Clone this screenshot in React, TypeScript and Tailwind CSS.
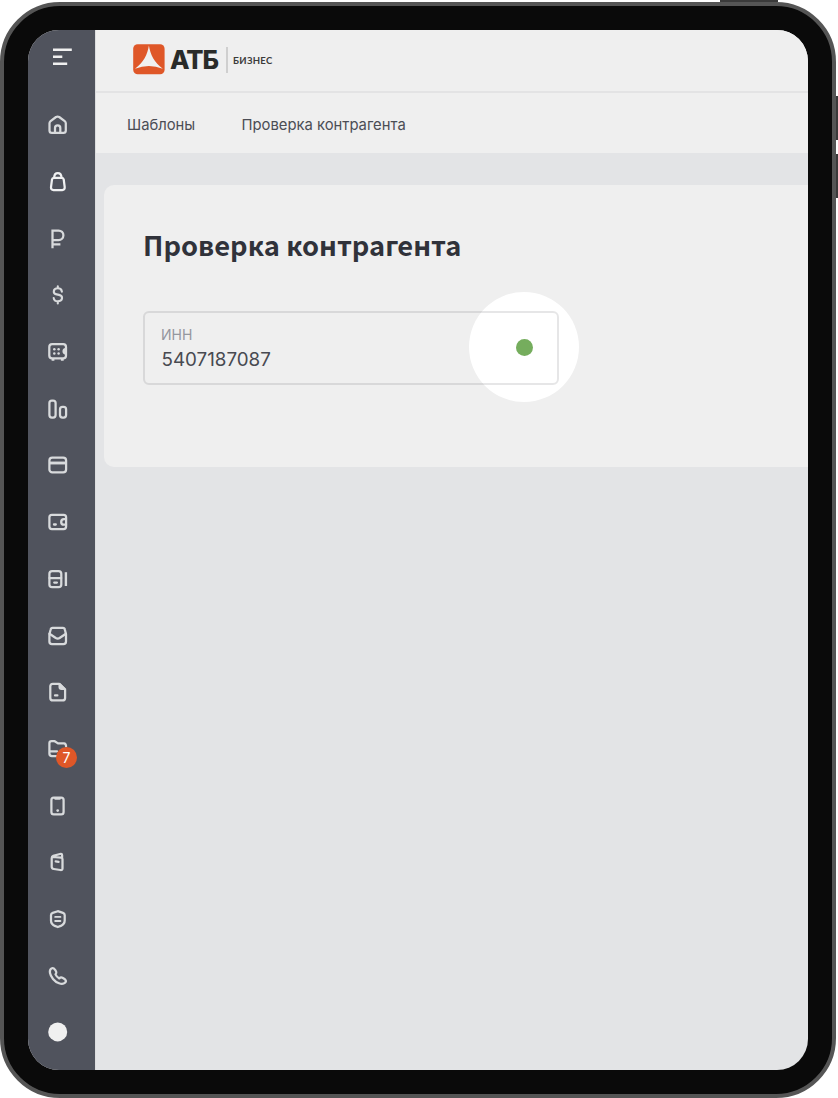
import React from "react";

type IconProps = { children: React.ReactNode; bright?: boolean };

function Icon({ children, bright }: IconProps) {
  return (
    <svg
      className={bright ? "h-5 w-5 overflow-visible text-[#f0f1f2]" : "h-5 w-5 overflow-visible text-[#d8dadc]"}
      viewBox="0 0 20 20"
      fill="none"
      stroke="currentColor"
      strokeWidth="2.25"
      strokeLinecap="round"
      strokeLinejoin="round"
    >
      {children}
    </svg>
  );
}

const icons: React.ReactNode[] = [
  <Icon key="home">
    <path d="M1.5 8.3Q1.5 7 2.6 6.1L8 2Q9.6 1.2 11.2 2L16.7 6.1Q17.8 7 17.8 8.3V15.5Q17.8 17.9 15.4 17.9H3.9Q1.5 17.9 1.5 15.5Z" />
    <path d="M7 17.6V13A2.65 2.65 0 0 1 12.3 13V17.6" />
  </Icon>,
  <Icon key="bag" bright>
    <path d="M5.8 5.8H13.9Q15.4 5.8 15.7 7.4L16.7 15.1Q16.9 18 14.2 18H5.5Q2.8 18 3 15.1L4 7.4Q4.3 5.8 5.8 5.8Z" />
    <path d="M6.2 5.4Q6.4 1.2 9.8 1.2T13.5 5.4" />
  </Icon>,
  <Icon key="ruble">
    <path strokeLinecap="butt" strokeLinejoin="miter" d="M4.5 19.2V1.5H10.6A4.8 4.8 0 0 1 10.6 11.1H4.5M3.4 15.4H12.4" />
  </Icon>,
  <Icon key="dollar">
    <path strokeWidth="2.1" d="M9.8 1.2V3M9.8 16.5V18.4M13.9 6.6Q13.4 3.3 9.9 3.3C4.7 3.3 4.6 8.6 8.7 9.4L11 9.9C15.5 10.9 14.9 16.3 9.9 16.3Q6 16.3 5.7 13" />
  </Icon>,
  <Icon key="safe">
    <rect x="1.3" y="2.2" width="16.7" height="14.2" rx="2.8" />
    <path strokeLinecap="butt" strokeWidth="2.8" d="M5 16.5V18.8M14.3 16.5V18.8" />
    <path strokeWidth="1.7" d="M17.5 6.8Q15.3 7.1 15.3 9.3T17.5 11.8Z" fill="currentColor" />
    <g fill="currentColor" stroke="none">
      <circle cx="6.3" cy="7.2" r="1.25" /><circle cx="10.6" cy="7.2" r="1.25" />
      <circle cx="6.3" cy="11.6" r="1.25" /><circle cx="10.6" cy="11.6" r="1.25" />
    </g>
  </Icon>,
  <Icon key="bars">
    <rect x="1.4" y="1.5" width="6.2" height="17" rx="2.5" />
    <rect x="12" y="7.9" width="6.1" height="10.6" rx="2.5" />
  </Icon>,
  <Icon key="card">
    <rect x="1.4" y="2.6" width="16.7" height="14.7" rx="2.9" />
    <path strokeWidth="2.9" strokeLinecap="butt" d="M1.5 8H18" />
  </Icon>,
  <Icon key="wallet">
    <rect x="1.4" y="2.8" width="16.7" height="14.2" rx="2.5" />
    <path strokeWidth="2.3" d="M18 7.1H16A2.8 2.8 0 0 0 16 12.7H18M6 12.5H7.8" />
  </Icon>,
  <Icon key="server">
    <rect x="1.4" y="2.1" width="11.9" height="16" rx="2.7" />
    <path d="M1.5 9.1H13.2M6.2 13.5H8.9" />
    <path strokeWidth="2.4" strokeLinecap="butt" d="M17.9 3.2V17" />
  </Icon>,
  <Icon key="mail">
    <path d="M4.6 1.9H14.9Q16.6 1.9 16.9 3.7L18 8.2V15.4Q18 18 15.4 18H4Q1.4 18 1.4 15.4V8.2L2.6 3.7Q2.9 1.9 4.6 1.9Z" />
    <path d="M1.5 7.7L7.8 12Q9.7 13.2 11.6 12L17.9 7.7" />
  </Icon>,
  <Icon key="document">
    <path d="M4.8 1.8H11.2L17.1 7.4V15.9Q17.1 18.4 14.5 18.4H4.9Q2.3 18.4 2.3 15.9V4.3Q2.3 1.8 4.8 1.8Z" />
    <path fill="currentColor" d="M11.6 2.1V5Q11.6 6.8 13.5 6.8H16.2Z" />
    <path d="M7 13.4H9.4" />
  </Icon>,
  <Icon key="folder">
    <path d="M9 17.2H4Q1.4 17.2 1.4 14.6V4.3Q1.4 2.2 3.6 2.2H6.7L10 4.4H16Q18 4.6 18.1 7.4M1.6 12.3H9" />
  </Icon>,
  <Icon key="mobile">
    <rect x="3.4" y="1.7" width="12.2" height="16.7" rx="2.4" />
    <path strokeWidth="2.4" d="M7.4 2.6H11.7" />
    <circle cx="9.7" cy="14.6" r="1.35" fill="currentColor" stroke="none" />
  </Icon>,
  <Icon key="book">
    <path d="M4.4 5L13.3 5.7Q14.5 5.9 14.5 7.3V16.4Q14.5 18.4 12.3 18L5.8 17Q3.7 16.7 3.7 14.8V6.2Q3.7 4.2 5.2 3.8L12 2Q14 1.6 14.1 3.2V5.4" />
    <path d="M7.7 9.3L10.6 9.8" />
  </Icon>,
  <Icon key="shield">
    <path d="M9.8 2.2L15 3.8Q16.7 4.3 16.7 6V11.4Q16.7 15 12.8 16.9L9.8 18L6.8 16.9Q3 15 3 11.4V6Q3 4.3 4.7 3.8Z" />
    <path strokeWidth="1.9" d="M7.2 7.9H12.4M7.2 12H12.4" />
  </Icon>,
  <Icon key="call">
    <path d="M3.2 2.6Q5.3 1.2 7.1 3.8L8.1 5.5Q8.9 7.2 7.5 8.4Q8.6 10.9 11.3 12.4Q12.8 10.7 14.9 12L16.9 13.3Q18.9 15 17.1 16.7C14 19.4 8 16.7 5 13C1.8 9.1.8 4.5 3.2 2.6Z" />
  </Icon>,
  <Icon key="status" bright>
    <circle cx="9.7" cy="9.9" r="9.5" fill="#f0f0f0" stroke="none" />
  </Icon>,
];

function Sidebar() {
  return (
    <aside className="flex w-[67px] shrink-0 flex-col bg-[#50535d]">
      <div className="h-[67px] shrink-0 pl-[25px] pt-[18px]">
        <svg className="h-[18px] w-[19px]" viewBox="0 0 19 18" stroke="#f0f0f0" strokeWidth="2.5">
          <path d="M0 1.7H18.8M0 8.8H9.3M0 15.7H14.2" />
        </svg>
      </div>
      <nav className="flex flex-col pl-5">
        {icons.map((icon, index) => (
          <div key={index} className="relative flex h-[56.7px] items-center">
            {icon}
            {index === 11 && (
              <span className="absolute left-[8px] top-[26.2px] flex h-[21px] w-[21px] items-center justify-center rounded-full bg-[#df5728] text-[14px] text-white">
                7
              </span>
            )}
          </div>
        ))}
      </nav>
    </aside>
  );
}

function Logo() {
  return (
    <div className="flex items-center pl-[37px] pt-[14px]">
      <svg className="h-[31px] w-[32px]" viewBox="0 0 32 31">
        <rect x="0.2" y="0.3" width="31.4" height="30" rx="4.5" fill="#df5728" />
        <path d="M15.9 1.6C17.3 10.5 21.3 18.8 29.8 24.8Q15.9 19.4 2 24.8C10.5 18.8 14.5 10.5 15.9 1.6Z" fill="#f0f0f0" />
      </svg>
      <span className="ml-[5px] w-[49px] pt-px font-['Inter',sans-serif] text-[25.5px] leading-[30px] font-extrabold tracking-[-1px] text-[#292b29]">
        АТБ
      </span>
      <span className="ml-[7px] h-[26px] w-[1.5px] bg-[#cfcfcf]" />
      <span className="ml-[5.5px] pt-[3px] font-['Lato',sans-serif] text-[9.5px] leading-[26px] font-bold tracking-[0.3px] text-[#3b3c3b]">
        БИЗНЕС
      </span>
    </div>
  );
}

export default function App() {
  return (
    <div className="relative h-[1098px] w-[838px] overflow-hidden bg-white pt-[2px] font-['Inter',sans-serif]">
      <i className="absolute left-[720px] top-0 h-[2px] w-[58px] bg-[#3a3a3a]" />
      <i className="absolute left-[836px] top-[96px] h-[44px] w-[2px] bg-[#3a3a3a]" />
      <i className="absolute left-[836px] top-[154px] h-[44px] w-[2px] bg-[#3a3a3a]" />
      <div className="h-[1096px] w-[836px] rounded-[60px] border-4 border-[#555555] bg-[#0a0a0a] p-6">
        <div className="flex h-[1040px] w-[780px] overflow-hidden rounded-[31px] bg-[#e3e4e6]">
          <Sidebar />
          <main className="min-w-0 flex-1 border-l border-[#dcddde]">
            <header className="h-[63px] border-b-2 border-[#e3e3e4] bg-[#efefef]">
              <Logo />
            </header>
            <nav className="flex h-[60.3px] items-center gap-[46px] bg-[#efefef] pl-[31px] pt-[3px] text-[14.8px] text-[#4b4d55]">
              <a className="w-[68.5px] whitespace-nowrap">Шаблоны</a>
              <a className="whitespace-nowrap">Проверка контрагента</a>
            </nav>
            <section className="ml-2 mt-8 h-[282px] rounded-l-[10px] bg-[#efefef] pl-[39px] pt-[38px]">
              <h1 className="font-['Noto_Sans_CJK_SC',sans-serif] text-[27.3px] leading-[42px] font-bold text-[#30323a]">
                Проверка контрагента
              </h1>
              <div className="relative mt-[46px] h-[74px] w-[416px]">
                <span className="absolute left-[326px] top-[-19px] h-[110px] w-[110px] rounded-full bg-white" />
                <div className="relative flex h-full items-center justify-between rounded-[6px] border-2 border-[#30323a]/[0.12] pl-4 pr-6">
                  <div className="flex flex-col pt-[2px]">
                    <span className="text-[14px] leading-[20px] text-[#95979e]">ИНН</span>
                    <span className="pl-[0.5px] pt-px text-[18.8px] leading-[28px] text-[#484a51]">5407187087</span>
                  </div>
                  <span className="mb-px h-[17px] w-[17px] rounded-full bg-[#75ad5d]" />
                </div>
              </div>
            </section>
          </main>
        </div>
      </div>
    </div>
  );
}
